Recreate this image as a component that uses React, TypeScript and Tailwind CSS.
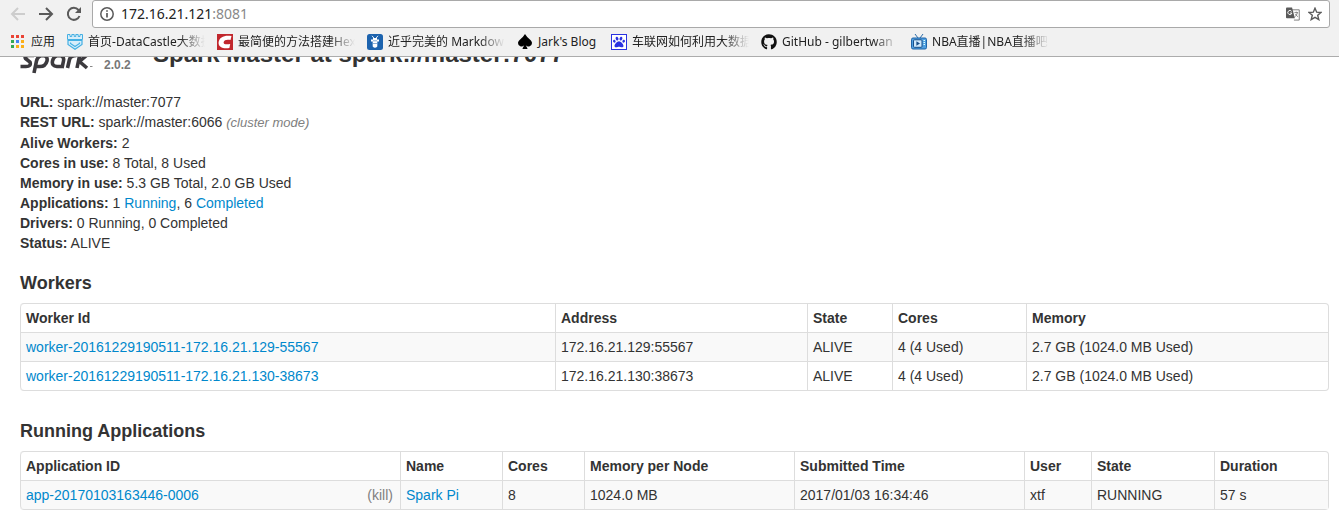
import React from "react";
import type { ReactNode } from "react";
import { FaGithub, FaPaw } from "react-icons/fa";
import { BsSuitSpadeFill } from "react-icons/bs";

function AppsIcon() {
  const colors = ["#ea4335", "#ea4335", "#ea4335", "#34a853", "#4285f4", "#fbaf17", "#34a853", "#fbaf17", "#fbaf17"];
  return (
    <svg width="14" height="14" viewBox="0 0 14 14" aria-hidden="true">
      {colors.map((c, i) => (
        <rect key={i} x={(i % 3) * 5} y={Math.floor(i / 3) * 5} width="3" height="3" fill={c} />
      ))}
    </svg>
  );
}

function CastleIcon() {
  return (
    <svg width="16" height="16" viewBox="0 0 16 16" fill="#d8eefa" stroke="#45b0e3" aria-hidden="true">
      <path d="M.5 .5V5.5H15.5V.5H13V2.5H11.2V.5H8.8V2.5H7.2V.5H4.8V2.5H3V.5Z" />
      <path d="M1 6.500H15V10.500L8 15.300L1 10.500Z" strokeWidth="1.200" />
      <path d="M3.500 8.500V9.500L8 12.500L12.500 9.500V8.500" fill="none" strokeWidth="1.200" />
    </svg>
  );
}

function CsdnIcon() {
  return (
    <svg width="16" height="16" viewBox="0 0 16 16" aria-hidden="true">
      <rect width="16" height="16" fill="#c1272d" />
      <path d="M14.500 2L13.500 6C10.500 5.200 7 5.600 6.600 8.200C6.400 10.500 9.500 10.700 13.200 10L12.400 14C6 15 1.200 13 1.600 8.400C2.200 2.700 8 .800 14.500 2Z" fill="#fff" />
    </svg>
  );
}

function CmdIcon() {
  return (
    <svg width="16" height="16" viewBox="0 0 16 16" aria-hidden="true">
      <rect width="16" height="16" rx="2.5" fill="#1c63ae" />
      <path d="M5 1.800L7 4.200M11 1.800L9 4.200" stroke="#fff" strokeWidth=".9" />
      <path d="M6 4H10V5.500H12V7.500H10.300V12.500Q8 15 5.700 12.500V7.500H4V5.500H6Z" fill="#fff" />
      <path d="M6 6.800H10M6 9.500H10" stroke="#1c63ae" strokeWidth=".5" />
    </svg>
  );
}

function TvIcon() {
  return (
    <svg width="16" height="16" viewBox="0 0 16 16" aria-hidden="true">
      <path d="M4 0L7 4M12 0L9 4" stroke="#2b6ca8" />
      <rect x=".5" y="4" width="15" height="11" rx="1.5" fill="#4f9fe0" stroke="#1f64a8" />
      <rect x="2.5" y="5.8" width="8.5" height="7.5" rx="1" fill="#cfe8fb" stroke="#174f8a" />
      <path d="M5.4 7.2L9 9.5L5.4 11.8Z" fill="#174f8a" />
      <path d="M12.5 6.5H14M12.5 8.5H14M12.5 10.5H14" stroke="#dff" />
    </svg>
  );
}

function TranslateIcon() {
  return (
    <svg width="14" height="14" viewBox="0 0 15 14" aria-hidden="true">
      <path d="M6.5 2.5H14.2V13.5H8.5" fill="#fff" stroke="#777" />
      <path d="M1 0H6.5L9.5 11.5H1Q0 11.5 0 10.5V1Q0 0 1 0Z" fill="#5a5a5a" />
      <path d="M6 4.2A2.2 2.2 0 1 0 6.3 6H4.3" fill="none" stroke="#fff" />
      <path d="M9 5.5H13M11 4.5V5.5M12.3 5.5Q11.5 8.5 9.5 10M10 7L12.6 10" fill="none" stroke="#777" strokeWidth=".9" />
    </svg>
  );
}

function SparkLogo() {
  return (
    <svg width="74" height="30" viewBox="0 0 74 30" fill="none" stroke="#3c3a3e" strokeWidth="3.600" aria-label="Spark" role="img">
      <path d="M14 10.500H8.5Q4 10.500 5.500 13.500L10 17Q11.500 21.500 6 21.500H.5" />
      <path d="M14 28L16.5 16Q18 10.500 23 10.500Q28 11 27 16Q25.500 21.500 20 21.500H16" />
      <path d="M43 21.500H37Q31.500 21 32.500 16Q34 10.500 39 10.500Q44.500 11 43.500 16L42 23" />
      <path d="M47.500 23L49.500 14.500Q50.500 10.500 56.500 10.500" />
      <path d="M61 4L57 23M67.500 9.500L59.500 16.500L67 23" />
      <path d="M70 21.500H72.500" strokeWidth="1" stroke="#888" />
    </svg>
  );
}

function Bookmark({ icon, children }: { icon: ReactNode; children: ReactNode }) {
  return (
    <a href="#bookmark" className="flex shrink-0 items-center gap-[5px]">
      {icon}
      <span className="min-w-[61px] whitespace-nowrap">{children}</span>
    </a>
  );
}

function LongBookmark({ icon, children }: { icon: ReactNode; children: ReactNode }) {
  return (
    <a href="#bookmark" className="flex shrink-0 items-center gap-[5px]">
      {icon}
      <span className="w-[117px] overflow-hidden whitespace-nowrap [mask-image:linear-gradient(to_right,black_78%,transparent)]">
        {children}
      </span>
    </a>
  );
}

function BrowserBar() {
  return (
    <header className="border-b border-[#acacac] bg-[#f1f1f1] font-['Noto_Sans','Noto_Sans_CJK_SC',sans-serif]">
      <div className="flex h-7 items-center pr-[9px]">
        <div className="flex w-[92px] shrink-0 items-center gap-3 pl-[10px]">
          <button aria-label="Back" className="text-[#cdcdcd]">
            <svg width="16" height="16" viewBox="0 0 16 16" fill="none" stroke="currentColor" strokeWidth="2"><path d="M15 8H2.500M8 2L2 8L8 14" /></svg>
          </button>
          <button aria-label="Forward" className="text-[#5a5a5a]">
            <svg width="16" height="16" viewBox="0 0 16 16" fill="none" stroke="currentColor" strokeWidth="2"><path d="M1 8H13.500M8 2L14 8L8 14" /></svg>
          </button>
          <button aria-label="Reload" className="text-[#5a5a5a]">
            <svg width="16" height="16" viewBox="0 0 16 16" fill="none" stroke="currentColor" strokeWidth="2"><path d="M13.500 10A6 6 0 1 1 12.500 4L13 4.500" /><path d="M15 1V7H9Z" fill="currentColor" stroke="none" /></svg>
          </button>
        </div>
        <div className="flex h-7 flex-1 items-center rounded-[3px] border border-[#a9a9a9] bg-white px-[7px] text-sm text-[#222]">
          <svg width="14" height="14" viewBox="0 0 14 14" fill="none" stroke="#5a5a5a" strokeWidth="1.500" aria-hidden="true">
            <circle cx="7" cy="7" r="6.200" /><path d="M7 6V10.500M7 3.200V4.800" strokeWidth="1.700" />
          </svg>
          <a href="#address" className="ml-[7px] flex-1">172.16.21.121<span className="text-[#888]">:8081</span></a>
          <button aria-label="Translate this page"><TranslateIcon /></button>
          <button aria-label="Bookmark this page" className="ml-2">
            <svg width="14" height="14" viewBox="0 0 14 14" fill="none" stroke="#5a5a5a" strokeWidth="1.400"><path d="M7 1.200L8.700 5.200L13 5.500L9.700 8.300L10.800 12.600L7 10.300L3.200 12.600L4.300 8.300L1 5.500L5.300 5.200Z" /></svg>
          </button>
        </div>
      </div>
      <nav aria-label="Bookmarks" className="flex h-7 items-center gap-3 overflow-hidden pl-[11px] text-xs text-[#222]">
        <a href="#apps" className="flex shrink-0 items-center gap-1.5"><AppsIcon />应用</a>
        <LongBookmark icon={<CastleIcon />}>首页-DataCastle大数据</LongBookmark>
        <LongBookmark icon={<CsdnIcon />}>最简便的方法搭建Hex</LongBookmark>
        <LongBookmark icon={<CmdIcon />}>近乎完美的 Markdown</LongBookmark>
        <Bookmark icon={<BsSuitSpadeFill size={16} color="#000" />}>Jark's Blog</Bookmark>
        <LongBookmark icon={<span className="flex size-4 items-center justify-center border border-[#2932e1] bg-white"><FaPaw size={12} color="#2932e1" /></span>}>车联网如何利用大数据</LongBookmark>
        <LongBookmark icon={<FaGithub size={16} color="#111" />}>GitHub - gilbertwan</LongBookmark>
        <LongBookmark icon={<TvIcon />}>NBA直播|NBA直播吧</LongBookmark>
      </nav>
    </header>
  );
}

function Table({ label, columns, children }: { label: string; columns: [string, string][]; children: ReactNode }) {
  return (
    <table aria-label={label} className="w-full table-fixed border-separate border-spacing-0 rounded-[4px] border border-l-0 border-[#ddd] text-left">
      <thead>
        <tr>
          {columns.map(([name, width]) => (
            <th key={name} className={`border-l border-[#ddd] px-[5px] py-1 font-bold first:rounded-tl-[4px] ${width}`}>{name}</th>
          ))}
        </tr>
      </thead>
      <tbody>{children}</tbody>
    </table>
  );
}

function Row({ cells }: { cells: ReactNode[] }) {
  return (
    <tr className="group odd:bg-[#f9f9f9]">
      {cells.map((cell, i) => (
        <td key={i} className="border-t border-l border-[#ddd] px-[5px] py-1 group-last:first:rounded-bl-[4px]">{cell}</td>
      ))}
    </tr>
  );
}

function Link({ children }: { children: ReactNode }) {
  return <a href="#detail" className="text-[#0088cc]">{children}</a>;
}

const workerColumns: [string, string][] = [
  ["Worker Id", ""],
  ["Address", "w-[252px]"],
  ["State", "w-[85px]"],
  ["Cores", "w-[134px]"],
  ["Memory", "w-[302px]"],
];

const appColumns: [string, string][] = [
  ["Application ID", ""],
  ["Name", "w-[102px]"],
  ["Cores", "w-[82px]"],
  ["Memory per Node", "w-[210px]"],
  ["Submitted Time", "w-[230px]"],
  ["User", "w-[67px]"],
  ["State", "w-[123px]"],
  ["Duration", "w-[114px]"],
];

export default function App() {
  return (
    <div className="min-h-screen bg-white">
      <BrowserBar />
      <main className="overflow-hidden pr-[10px] pb-5 pl-5 font-['Liberation_Sans',Arial,sans-serif] text-sm leading-5 text-[#333]">
        <div className="-mt-5 flex h-10 items-start">
          <div className="mt-2"><SparkLogo /></div>
          <span className="mt-5 ml-[10px] w-[49px] text-xs font-bold text-[#777]">2.0.2</span>
          <h1 className="text-2xl leading-[34px] font-bold whitespace-nowrap">Spark Master at spark://master:7077</h1>
        </div>
        <ul className="mt-[15px]">
          <li><strong>URL:</strong> spark://master:7077</li>
          <li><strong>REST URL:</strong> spark://master:6066 <span className="text-[13px] text-[#808080] italic">(cluster mode)</span></li>
          <li><strong>Alive Workers:</strong> 2</li>
          <li><strong>Cores in use:</strong> 8 Total, 8 Used</li>
          <li><strong>Memory in use:</strong> 5.3 GB Total, 2.0 GB Used</li>
          <li><strong>Applications:</strong> 1 <Link>Running</Link>, 6 <Link>Completed</Link></li>
          <li><strong>Drivers:</strong> 0 Running, 0 Completed</li>
          <li><strong>Status:</strong> ALIVE</li>
        </ul>
        <h2 className="mt-5 mb-[10px] text-lg leading-5 font-bold">Workers</h2>
        <Table label="Workers" columns={workerColumns}>
          <Row cells={[<Link>worker-20161229190511-172.16.21.129-55567</Link>, "172.16.21.129:55567", "ALIVE", "4 (4 Used)", "2.7 GB (1024.0 MB Used)"]} />
          <Row cells={[<Link>worker-20161229190511-172.16.21.130-38673</Link>, "172.16.21.130:38673", "ALIVE", "4 (4 Used)", "2.7 GB (1024.0 MB Used)"]} />
        </Table>
        <h2 className="mt-[30px] mb-[10px] text-lg leading-5 font-bold">Running Applications</h2>
        <Table label="Running Applications" columns={appColumns}>
          <Row
            cells={[
              <div className="flex justify-between pr-0.5"><Link>app-20170103163446-0006</Link><a href="#kill" className="text-[#808080]">(kill)</a></div>,
              <Link>Spark Pi</Link>, "8", "1024.0 MB", "2017/01/03 16:34:46", "xtf", "RUNNING", "57 s",
            ]}
          />
        </Table>
      </main>
    </div>
  );
}
